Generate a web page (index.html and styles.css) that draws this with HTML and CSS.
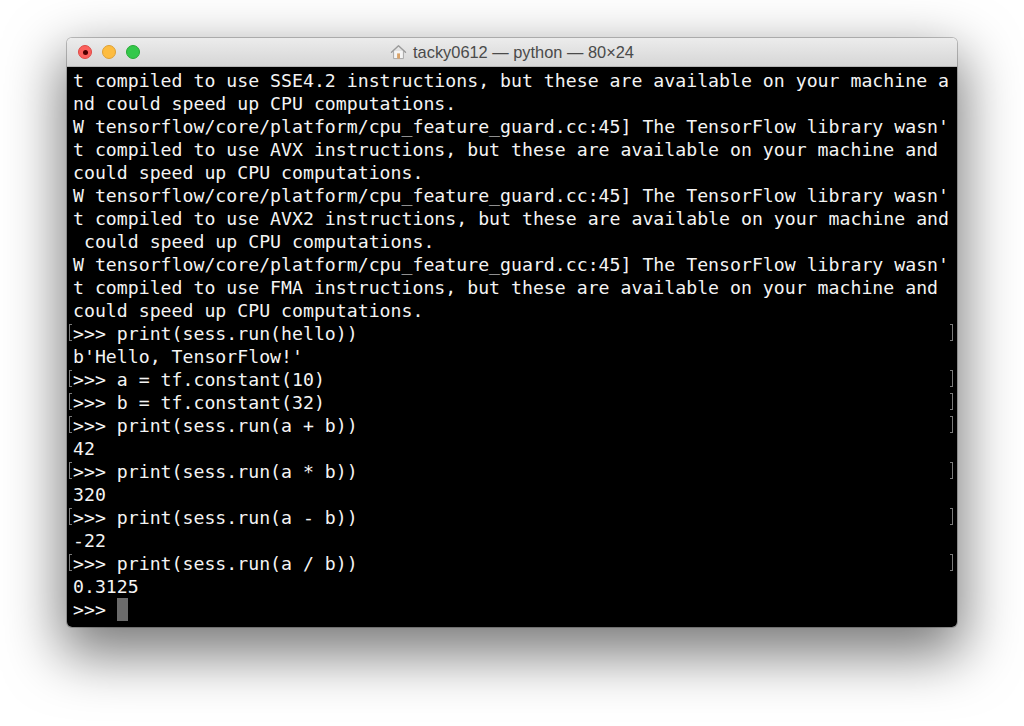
FILE: index.html
```html
<!DOCTYPE html>
<html>
<head>
<meta charset="utf-8">
<title>tacky0612 — python — 80×24</title>
<link rel="stylesheet" href="styles.css">
</head>
<body>
<div class="window">
  <div class="titlebar">
    <div class="lights">
      <span class="light red"><span class="dot"></span></span>
      <span class="light yellow"></span>
      <span class="light green"></span>
    </div>
    <div class="title">
      <svg class="house" width="17" height="16" viewBox="0 0 17 16">
        <path d="M1.5 8.2 L8.5 1.8 L15.5 8.2" fill="none" stroke="#9a9a9a" stroke-width="1.4" stroke-linejoin="round" stroke-linecap="round"/>
        <path d="M3.6 7 V14.6 H13.4 V7" fill="#f5f5f5" stroke="#a8a8a8" stroke-width="1"/>
        <rect x="7.1" y="9.4" width="2.9" height="5.2" fill="#d9a36a"/>
      </svg>
      <span>tacky0612 — python — 80×24</span>
    </div>
  </div>
  <div class="term">
    <div class="ln">t compiled to use SSE4.2 instructions, but these are available on your machine a</div>
    <div class="ln">nd could speed up CPU computations.</div>
    <div class="ln">W tensorflow/core/platform/cpu_feature_guard.cc:45] The TensorFlow library wasn'</div>
    <div class="ln">t compiled to use AVX instructions, but these are available on your machine and</div>
    <div class="ln">could speed up CPU computations.</div>
    <div class="ln">W tensorflow/core/platform/cpu_feature_guard.cc:45] The TensorFlow library wasn'</div>
    <div class="ln">t compiled to use AVX2 instructions, but these are available on your machine and</div>
    <div class="ln"> could speed up CPU computations.</div>
    <div class="ln">W tensorflow/core/platform/cpu_feature_guard.cc:45] The TensorFlow library wasn'</div>
    <div class="ln">t compiled to use FMA instructions, but these are available on your machine and</div>
    <div class="ln">could speed up CPU computations.</div>
    <div class="ln mark">&gt;&gt;&gt; print(sess.run(hello))</div>
    <div class="ln">b'Hello, TensorFlow!'</div>
    <div class="ln mark">&gt;&gt;&gt; a = tf.constant(10)</div>
    <div class="ln mark">&gt;&gt;&gt; b = tf.constant(32)</div>
    <div class="ln mark">&gt;&gt;&gt; print(sess.run(a + b))</div>
    <div class="ln">42</div>
    <div class="ln mark">&gt;&gt;&gt; print(sess.run(a * b))</div>
    <div class="ln">320</div>
    <div class="ln mark">&gt;&gt;&gt; print(sess.run(a - b))</div>
    <div class="ln">-22</div>
    <div class="ln mark">&gt;&gt;&gt; print(sess.run(a / b))</div>
    <div class="ln">0.3125</div>
    <div class="ln">&gt;&gt;&gt; <span class="cursor"> </span></div>
  </div>
</div>
</body>
</html>
```
FILE: styles.css
```css
html, body {
  margin: 0;
  padding: 0;
  background: #ffffff;
}

body {
  width: 1024px;
  height: 726px;
  overflow: hidden;
}

.window {
  margin: 38px 0 0 67px;
  width: 890px;
  height: 589px;
  border-radius: 5px;
  overflow: hidden;
  display: flex;
  flex-direction: column;
  box-shadow: 0 0 0 1px rgba(0, 0, 0, 0.22), 0 22px 55px 6px rgba(0, 0, 0, 0.52);
}

.titlebar {
  height: 29px;
  flex: none;
  background: linear-gradient(#ececec, #d6d6d6);
  border-bottom: 1px solid #b5b5b5;
  box-sizing: border-box;
  position: relative;
  display: flex;
  align-items: center;
  justify-content: center;
}

.lights {
  position: absolute;
  left: 11px;
  top: 7px;
  display: flex;
  gap: 10px;
}

.light {
  width: 14px;
  height: 14px;
  border-radius: 50%;
  box-sizing: border-box;
  display: flex;
  align-items: center;
  justify-content: center;
}

.red { background: #fc605c; border: 0.5px solid #de4a45; }
.yellow { background: #fdbc40; border: 0.5px solid #dea034; }
.green { background: #34c84a; border: 0.5px solid #27aa35; }

.dot {
  width: 5px;
  height: 5px;
  border-radius: 50%;
  background: #4d0000;
}

.title {
  display: flex;
  align-items: center;
  gap: 6px;
  font-family: "Liberation Sans", Arial, sans-serif;
  font-size: 16.4px;
  color: #4a4a4a;
  margin-top: 1px;
}

.house {
  margin-top: -2px;
}

.term {
  flex: 1;
  background: #000000;
  padding: 2px 6px 0 6px;
  font-family: "DejaVu Sans Mono", monospace;
  font-size: 18.2px;
  color: #f4f4f4;
}

.ln {
  height: 23px;
  line-height: 23px;
  white-space: pre;
  position: relative;
}

.mark::before {
  content: "";
  position: absolute;
  left: -4px;
  top: 2px;
  width: 2px;
  height: 15px;
  border: 1px solid #7a7a7a;
  border-right: none;
}

.mark::after {
  content: "";
  position: absolute;
  right: -2px;
  top: 2px;
  width: 2px;
  height: 15px;
  border: 1px solid #7a7a7a;
  border-left: none;
}

.cursor {
  display: inline-block;
  width: 11px;
  height: 23px;
  vertical-align: top;
  background: #6b6b6b;
}
```
